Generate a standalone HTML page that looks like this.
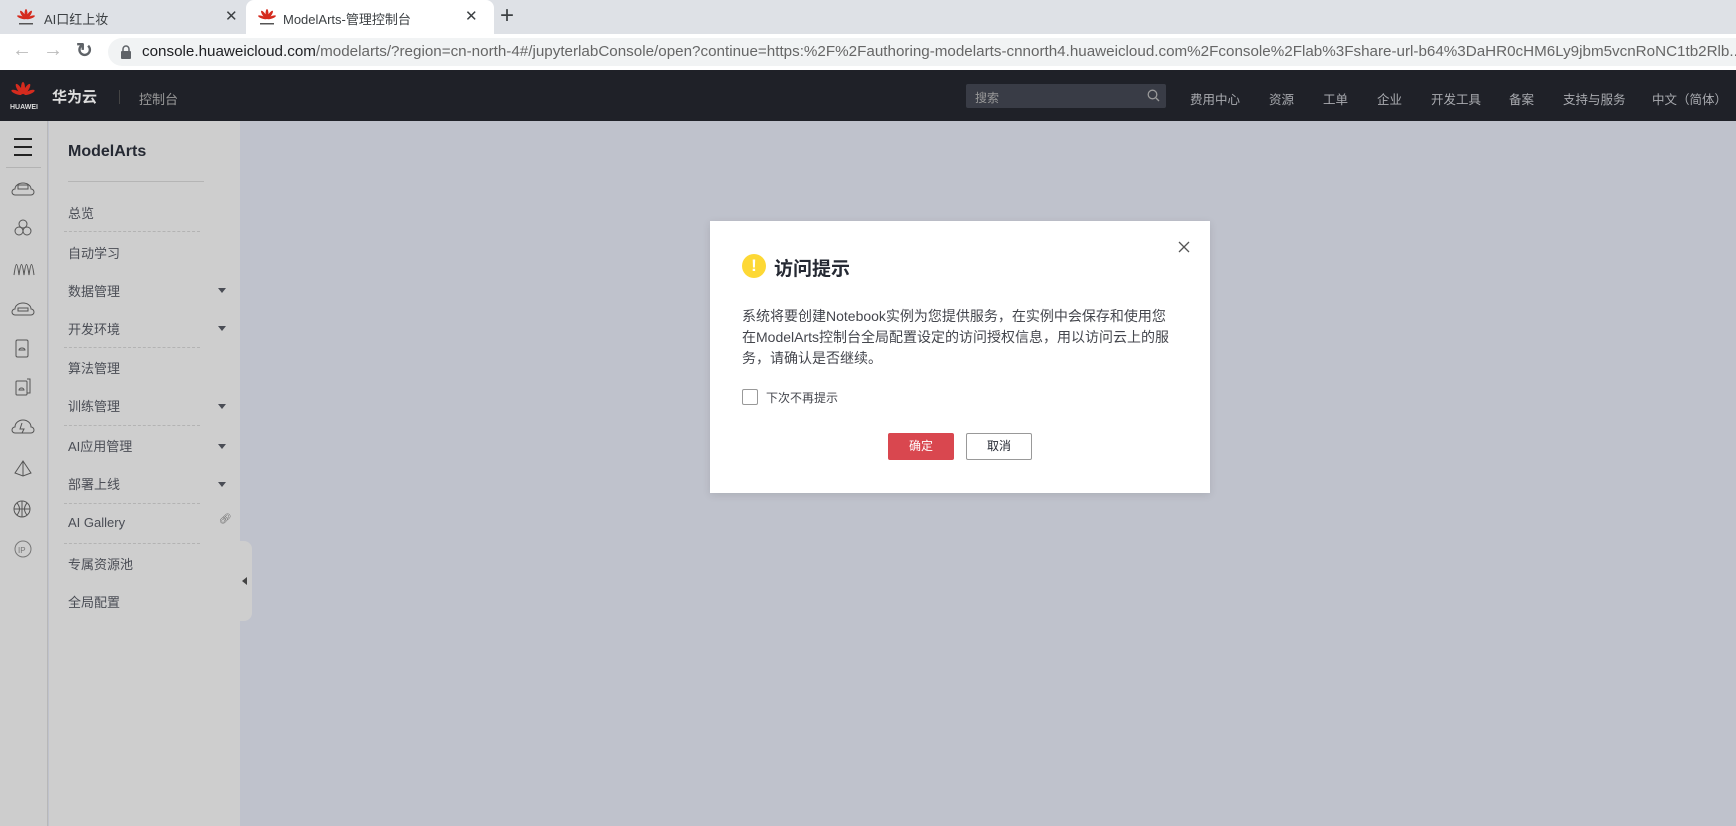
<!DOCTYPE html>
<html><head><meta charset="utf-8"><style>
*{margin:0;padding:0;box-sizing:border-box}
body{width:1736px;height:826px;overflow:hidden;position:relative;font-family:"Liberation Sans","Noto Sans CJK SC",sans-serif;background:#bfc2cc}
.a{position:absolute}
.nav{position:absolute;top:89px;font-size:12.5px;color:#a9abb0;white-space:nowrap}
.mi{position:absolute;left:68px;font-size:13px;color:#4a4d55;white-space:nowrap}
.dl{position:absolute;left:64px;width:136px;border-top:1px dashed #b3b3b3}
.ar{position:absolute;left:218px;width:0;height:0;border-left:4px solid transparent;border-right:4px solid transparent;border-top:5px solid #4a4d55}
</style></head><body>
<!-- tab bar -->
<div class="a" style="left:0;top:0;width:1736px;height:34px;background:#dee1e6"></div>
<div class="a" style="left:246px;top:0;width:248px;height:34px;background:#fff;border-radius:8px 8px 0 0"></div>
<svg class="a" style="left:17px;top:8px" width="18" height="18" viewBox="0 0 18 18"><g fill="#d52b1e"><ellipse cx="9" cy="6" rx="1.5" ry="5"/><ellipse cx="9" cy="6" rx="1.5" ry="5" transform="rotate(-35 9 11)"/><ellipse cx="9" cy="6" rx="1.5" ry="5" transform="rotate(35 9 11)"/><ellipse cx="9" cy="6" rx="1.3" ry="4.5" transform="rotate(-70 9 11)"/><ellipse cx="9" cy="6" rx="1.3" ry="4.5" transform="rotate(70 9 11)"/></g><rect x="2" y="15" width="14" height="1.5" fill="#555"/></svg>
<div class="a" style="left:44px;top:9px;font-size:13px;color:#3c4043">AI口红上妆</div>
<div class="a" style="left:225px;top:7px;font-size:15px;color:#3c4043">✕</div>
<svg class="a" style="left:258px;top:8px" width="18" height="18" viewBox="0 0 18 18"><g fill="#d52b1e"><ellipse cx="9" cy="6" rx="1.5" ry="5"/><ellipse cx="9" cy="6" rx="1.5" ry="5" transform="rotate(-35 9 11)"/><ellipse cx="9" cy="6" rx="1.5" ry="5" transform="rotate(35 9 11)"/><ellipse cx="9" cy="6" rx="1.3" ry="4.5" transform="rotate(-70 9 11)"/><ellipse cx="9" cy="6" rx="1.3" ry="4.5" transform="rotate(70 9 11)"/></g><rect x="2" y="15" width="14" height="1.5" fill="#555"/></svg>
<div class="a" style="left:283px;top:9px;font-size:13px;color:#3c4043">ModelArts-管理控制台</div>
<div class="a" style="left:465px;top:7px;font-size:15px;color:#3c4043">✕</div>
<div class="a" style="left:500px;top:2px;font-size:24px;color:#3c4043;font-weight:300">+</div>
<!-- address bar -->
<div class="a" style="left:0;top:34px;width:1736px;height:36px;background:#fff"></div>
<div class="a" style="left:12px;top:39px;font-size:20px;color:#bbb">←</div>
<div class="a" style="left:43px;top:39px;font-size:20px;color:#bbb">→</div>
<div class="a" style="left:76px;top:38px;font-size:20px;color:#5f6368;font-weight:bold">↻</div>
<div class="a" style="left:108px;top:38px;width:1628px;height:28px;background:#f1f3f4;border-radius:14px 0 0 14px"></div>
<svg class="a" style="left:120px;top:45px" width="12" height="14"><rect x="1" y="6" width="10" height="8" rx="1" fill="#5f6368"/><path d="M3 6V4a3 3 0 0 1 6 0v2" stroke="#5f6368" stroke-width="1.5" fill="none"/></svg>
<div class="a" style="left:142px;top:43px;width:1594px;font-size:15.2px;color:#666;white-space:nowrap;overflow:hidden"><span style="color:#202124">console.huaweicloud.com</span>/modelarts/?region=cn-north-4#/jupyterlabConsole/open?continue=https:%2F%2Fauthoring-modelarts-cnnorth4.huaweicloud.com%2Fconsole%2Flab%3Fshare-url-b64%3DaHR0cHM6Ly9jbm5vcnRoNC1tb2Rlb...</div>
<!-- header -->
<div class="a" style="left:0;top:70px;width:1736px;height:51px;background:#1f2128"></div>
<svg class="a" style="left:11px;top:82px" width="24" height="22" viewBox="0 0 24 22"><g fill="#d52b1e"><ellipse cx="12" cy="6" rx="2" ry="6"/><ellipse cx="12" cy="6" rx="2" ry="6" transform="rotate(-32 12 13)"/><ellipse cx="12" cy="6" rx="2" ry="6" transform="rotate(32 12 13)"/><ellipse cx="12" cy="6" rx="1.8" ry="5.5" transform="rotate(-68 12 13)"/><ellipse cx="12" cy="6" rx="1.8" ry="5.5" transform="rotate(68 12 13)"/></g></svg>
<div class="a" style="left:10px;top:104px;font-size:7px;color:#ddd;font-weight:bold">HUAWEI</div>
<div class="a" style="left:52px;top:86px;font-size:15px;color:#ddd;font-weight:bold">华为云</div>
<div class="a" style="left:119px;top:90px;width:1px;height:14px;background:#444"></div>
<div class="a" style="left:139px;top:89px;font-size:13px;color:#999">控制台</div>
<div class="a" style="left:966px;top:84px;width:200px;height:24px;background:#393c46;border-radius:2px"></div>
<div class="a" style="left:975px;top:89px;font-size:12px;color:#999">搜索</div>
<svg class="a" style="left:1147px;top:89px" width="13" height="13"><circle cx="5.5" cy="5.5" r="4.3" stroke="#999" stroke-width="1.3" fill="none"/><path d="M9 9l3 3" stroke="#999" stroke-width="1.3"/></svg>
<div class="nav" style="left:1190px">费用中心</div>
<div class="nav" style="left:1269px">资源</div>
<div class="nav" style="left:1323px">工单</div>
<div class="nav" style="left:1377px">企业</div>
<div class="nav" style="left:1431px">开发工具</div>
<div class="nav" style="left:1509px">备案</div>
<div class="nav" style="left:1563px">支持与服务</div>
<div class="nav" style="left:1652px">中文（简体）</div>
<!-- left icon col -->
<div class="a" style="left:0;top:121px;width:48px;height:705px;background:#cdcdcd;border-right:1px solid #b8b8b8"></div>
<div class="a" style="left:14px;top:138px;width:18px;height:2px;background:#222"></div>
<div class="a" style="left:14px;top:146px;width:18px;height:2px;background:#222"></div>
<div class="a" style="left:14px;top:154px;width:18px;height:2px;background:#222"></div>
<div class="a" style="left:6px;top:167px;width:35px;height:1px;background:#b3b3b3"></div>
<svg class="a" style="left:0;top:121px" width="48" height="450" fill="none" stroke="#555" stroke-width="1">
<path d="M15 68a8 6 0 0 1 16 0a3 3 0 0 1 0 6h-16a3 3 0 0 1 0-6z"/><rect x="18" y="64" width="10" height="4"/>
<circle cx="23" cy="103" r="4"/><circle cx="19" cy="110" r="4"/><circle cx="27" cy="110" r="4"/>
<path d="M14 154c2-14 3-14 5 0c2-14 3-14 5 0c2-14 3-14 5 0c2-14 3-14 5 0"/>
<path d="M15 188a8 6 0 0 1 16 0a3 3 0 0 1 0 6h-16a3 3 0 0 1 0-6z"/><rect x="18" y="187" width="10" height="3"/>
<rect x="16" y="219" width="12" height="17" rx="1.5"/><path d="M19 229a3 2 0 0 1 6 0z"/>
<rect x="16" y="260" width="11" height="14" rx="1"/><path d="M27 258h3v14h-3"/><path d="M19 269a2.5 2 0 0 1 5 0z"/>
<path d="M15 306a8 7 0 0 1 16 0a3 3 0 0 1 0 6h-16a3 3 0 0 1-0-6z"/><path d="M22 302l-2 6h4l-2 4"/>
<path d="M23 340l-8 12l8 3l8-3z"/><path d="M23 340v15"/>
<circle cx="22" cy="388" r="8"/><path d="M14 388h16M22 380v16M17 382q5 6 0 12M27 382q-5 6 0 12"/>
<circle cx="23" cy="428" r="8" stroke="#777"/><text x="18" y="432" font-size="8" fill="#777" stroke="none">IP</text>
</svg>
<!-- menu panel -->
<div class="a" style="left:49px;top:121px;width:191px;height:705px;background:#cecece"></div>
<div class="a" style="left:68px;top:143px;font-size:16px;color:#252933;font-weight:bold">ModelArts</div>
<div class="a" style="left:68px;top:181px;width:136px;height:1px;background:#b5b5b5"></div>
<div class="mi" style="top:203px">总览</div>
<div class="dl" style="top:231px"></div>
<div class="mi" style="top:243px">自动学习</div>
<div class="mi" style="top:281px">数据管理</div><div class="ar" style="top:288px"></div>
<div class="mi" style="top:319px">开发环境</div><div class="ar" style="top:326px"></div>
<div class="dl" style="top:347px"></div>
<div class="mi" style="top:358px">算法管理</div>
<div class="mi" style="top:396px">训练管理</div><div class="ar" style="top:404px"></div>
<div class="dl" style="top:425px"></div>
<div class="mi" style="top:436px">AI应用管理</div><div class="ar" style="top:444px"></div>
<div class="mi" style="top:474px">部署上线</div><div class="ar" style="top:482px"></div>
<div class="dl" style="top:503px"></div>
<div class="mi" style="top:515px">AI Gallery</div>
<div class="a" style="left:219px;top:514px;font-size:10px;color:#666">🔗︎</div>
<div class="dl" style="top:543px"></div>
<div class="mi" style="top:554px">专属资源池</div>
<div class="mi" style="top:592px">全局配置</div>
<div class="a" style="left:240px;top:541px;width:12px;height:80px;background:#cecece;border-radius:0 8px 8px 0"></div>
<div class="a" style="left:242px;top:577px;width:0;height:0;border-top:4px solid transparent;border-bottom:4px solid transparent;border-right:5px solid #444"></div>
<!-- dialog -->
<div class="a" style="left:710px;top:221px;width:500px;height:272px;background:#fff;box-shadow:0 2px 8px rgba(0,0,0,.1)"></div>
<div class="a" style="left:742px;top:254px;width:24px;height:24px;border-radius:50%;background:#fdd835;color:#fff;font-weight:bold;font-size:17px;text-align:center;line-height:24px">!</div>
<div class="a" style="left:774px;top:254px;font-size:19px;font-weight:bold;color:#252933">访问提示</div>
<svg class="a" style="left:1178px;top:241px" width="12" height="12"><path d="M1 1l10 10M11 1L1 11" stroke="#555" stroke-width="1.3"/></svg>
<div class="a" style="left:742px;top:306px;width:446px;font-size:14px;line-height:21px;color:#44464d">系统将要创建Notebook实例为您提供服务，在实例中会保存和使用您<br>在ModelArts控制台全局配置设定的访问授权信息，用以访问云上的服<br>务，请确认是否继续。</div>
<div class="a" style="left:742px;top:389px;width:16px;height:16px;border:1px solid #999;border-radius:2px"></div>
<div class="a" style="left:766px;top:389px;font-size:12px;color:#44464d">下次不再提示</div>
<div class="a" style="left:888px;top:433px;width:66px;height:27px;background:#d9474f;border-radius:2px;color:#fff;font-size:12px;text-align:center;line-height:27px">确定</div>
<div class="a" style="left:966px;top:433px;width:66px;height:27px;border:1px solid #999;border-radius:2px;color:#252933;font-size:12px;text-align:center;line-height:25px">取消</div>
</body></html>
